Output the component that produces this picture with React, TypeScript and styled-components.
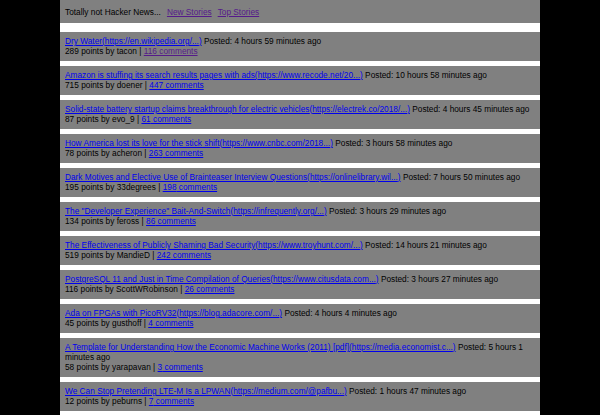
import React, { FC } from "react";
import styled, { createGlobalStyle } from "styled-components";

type Story = {
  title: string;
  url: string;
  posted: string;
  points: number;
  by: string;
  comments: number;
  visited?: boolean;
};

const stories: Story[] = [
  { title: "Dry Water", url: "https://en.wikipedia.org/...", posted: "4 hours 59 minutes ago", points: 289, by: "tacon", comments: 116, visited: true },
  { title: "Amazon is stuffing its search results pages with ads", url: "https://www.recode.net/20...", posted: "10 hours 58 minutes ago", points: 715, by: "doener", comments: 447 },
  { title: "Solid-state battery startup claims breakthrough for electric vehicles", url: "https://electrek.co/2018/...", posted: "4 hours 45 minutes ago", points: 87, by: "evo_9", comments: 61 },
  { title: "How America lost its love for the stick shift", url: "https://www.cnbc.com/2018...", posted: "3 hours 58 minutes ago", points: 78, by: "acheron", comments: 263 },
  { title: "Dark Motives and Elective Use of Brainteaser Interview Questions", url: "https://onlinelibrary.wil...", posted: "7 hours 50 minutes ago", points: 195, by: "33degrees", comments: 198 },
  { title: "The \"Developer Experience\" Bait-And-Switch", url: "https://infrequently.org/...", posted: "3 hours 29 minutes ago", points: 134, by: "feross", comments: 86 },
  { title: "The Effectiveness of Publicly Shaming Bad Security", url: "https://www.troyhunt.com/...", posted: "14 hours 21 minutes ago", points: 519, by: "MandieD", comments: 242 },
  { title: "PostgreSQL 11 and Just in Time Compilation of Queries", url: "https://www.citusdata.com...", posted: "3 hours 27 minutes ago", points: 116, by: "ScottWRobinson", comments: 26 },
  { title: "Ada on FPGAs with PicoRV32", url: "https://blog.adacore.com/...", posted: "4 hours 4 minutes ago", points: 45, by: "gusthoff", comments: 4 },
  { title: "A Template for Understanding How the Economic Machine Works (2011) [pdf]", url: "https://media.economist.c...", posted: "5 hours 1 minutes ago", points: 58, by: "yarapavan", comments: 3 },
  { title: "We Can Stop Pretending LTE-M Is a LPWAN", url: "https://medium.com/@pafbu...", posted: "1 hours 47 minutes ago", points: 12, by: "peburns", comments: 7 },
];

const GlobalStyle = createGlobalStyle`
  body {
    margin: 0;
    background: #000;
    font-family: "Liberation Sans", Arial, sans-serif;
    font-size: 8.3px;
    line-height: 10px;
    color: #000;
  }
`;

const Page = styled.div`
  width: 480px;
  margin: 0 auto;
  background: #fff;
  min-height: 415px;
`;

const Header = styled.div`
  display: flex;
  align-items: center;
  gap: 6px;
  height: 23px;
  padding: 1px 5px 0;
  box-sizing: border-box;
  background: #808080;
  margin-bottom: 9px;
`;

const Link = styled.a<{ $visited?: boolean }>`
  color: ${(p) => (p.$visited ? "#551a8b" : "#0000ee")};
  text-decoration: underline;
`;

const List = styled.div`
  display: flex;
  flex-direction: column;
  gap: 5px;
`;

const Item = styled.div`
  background: #808080;
  padding: 4px 5px 5px;
`;

const StoryRow: FC<{ story: Story }> = ({ story }) => (
  <Item>
    <div>
      <Link href="#">
        {story.title}({story.url})
      </Link>{" "}
      Posted: {story.posted}
    </div>
    <div>
      {story.points} points by {story.by} |{" "}
      <Link href="#" $visited={story.visited}>
        {story.comments} comments
      </Link>
    </div>
  </Item>
);

const App: FC = () => (
  <>
    <GlobalStyle />
    <Page>
      <Header>
        <span>Totally not Hacker News...</span>
        <Link href="#" $visited>New Stories</Link>
        <Link href="#" $visited>Top Stories</Link>
      </Header>
      <List>
        {stories.map((s) => (
          <StoryRow key={s.title} story={s} />
        ))}
      </List>
    </Page>
  </>
);

export default App;
